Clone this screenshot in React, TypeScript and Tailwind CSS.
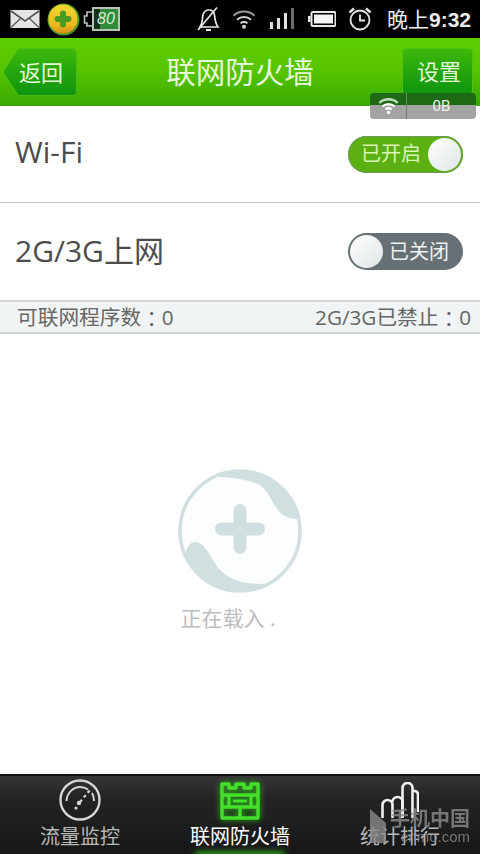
import React from "react";

const CJK = "font-['Open_Sans','Noto_Sans_CJK_SC',sans-serif]";

function Mail() {
  return (
    <svg width="30" height="20" viewBox="0 0 30 20">
      <rect x="0.5" y="1" width="29" height="18" fill="#e4e4e4" />
      <path d="M1 2 L15 12 L29 2" fill="none" stroke="#555" strokeWidth="1.6" />
      <path d="M1 18.5 L11 9 M29 18.5 L19 9" fill="none" stroke="#555" strokeWidth="1.2" />
    </svg>
  );
}

function Guard() {
  return (
    <svg width="33" height="33" viewBox="0 0 33 33">
      <defs>
        <linearGradient id="g1" x1="0" y1="0" x2="0" y2="1">
          <stop offset="0" stopColor="#f2d930" />
          <stop offset="0.7" stopColor="#eeb81e" />
          <stop offset="1" stopColor="#d98f14" />
        </linearGradient>
      </defs>
      <circle cx="16.5" cy="16.5" r="16" fill="#4f9a2c" />
      <circle cx="16" cy="16" r="14.5" fill="url(#g1)" />
      <path d="M16 7.5 a3 3 0 0 1 3 3 v2.5 h2.5 a3 3 0 0 1 0 6 h-2.5 v2.5 a3 3 0 0 1 -6 0 v-2.5 h-2.5 a3 3 0 0 1 0 -6 h2.5 v-2.5 a3 3 0 0 1 3 -3Z" fill="#4c9a20" />
    </svg>
  );
}

function GreenBattery() {
  return (
    <div className="flex items-center">
      <svg width="9" height="22" viewBox="0 0 9 22">
        <path d="M9 4 H4 V8 H1.5 V15 H4 V18 H9" fill="none" stroke="#b9c6b9" strokeWidth="1.6" />
      </svg>
      <div className="flex h-[24px] w-[28px] items-center justify-start border-2 border-[#b5c4b5] bg-[linear-gradient(90deg,#14331a_0%,#14331a_25%,#2e8c3c_25%,#2e8c3c_100%)] pl-[3px]">
        <span className="font-['Liberation_Sans',sans-serif] text-[16px] italic leading-none text-[#d9ecd9]">80</span>
      </div>
    </div>
  );
}

function MuteBell() {
  return (
    <svg width="24" height="26" viewBox="0 0 24 26" fill="none" stroke="#e8e8e8" strokeWidth="1.7">
      <path d="M4 21 C7 17 6 13 7 9 C8 5 11 4 13 4 C16 4 18 6 18.5 9 C19 13 19 17 22 21 Z" />
      <path d="M10 24 h5" strokeWidth="2" />
      <path d="M2 24 L21 1.5" />
    </svg>
  );
}

function Wifi({ color = "#cfcfcf", w = 24, sw = 2 }: { color?: string; w?: number; sw?: number }) {
  return (
    <svg width={w} height={w * 0.85} viewBox="0 0 24 20" fill="none" stroke={color} strokeWidth={sw}>
      <path d="M1.5 6.5 C7.5 1 16.5 1 22.5 6.5" opacity="0.75" />
      <path d="M5 10.5 C9 7 15 7 19 10.5" />
      <path d="M8.5 14 C10.5 12.5 13.5 12.5 15.5 14" />
      <circle cx="12" cy="17.5" r="2" fill={color} stroke="none" />
    </svg>
  );
}

function Signal() {
  return (
    <svg width="24" height="22" viewBox="0 0 24 22">
      <rect x="0" y="14" width="3" height="7" fill="#e0e0e0" />
      <rect x="7" y="10" width="3" height="11" fill="#e0e0e0" />
      <rect x="14" y="5" width="3" height="16" fill="#e0e0e0" />
      <rect x="21" y="0" width="3" height="21" fill="#6e6e6e" />
    </svg>
  );
}

function PhoneBattery() {
  return (
    <svg width="28" height="16" viewBox="0 0 28 16">
      <rect x="0" y="5" width="2.5" height="6" fill="#e8e8e8" />
      <rect x="3.5" y="1" width="24" height="14" rx="1.5" fill="none" stroke="#e8e8e8" strokeWidth="2" />
      <rect x="6" y="3.5" width="19" height="9" fill="#f4f4f4" />
    </svg>
  );
}

function Clock() {
  return (
    <svg width="24" height="24" viewBox="0 0 24 24" fill="none" stroke="#e8e8e8" strokeWidth="1.8">
      <circle cx="12" cy="13" r="9.5" />
      <path d="M12 7.5 V13.5 H17" />
      <path d="M1.5 5.5 L6 1.5 M22.5 5.5 L18 1.5" strokeWidth="2.4" />
    </svg>
  );
}

function StatusBar() {
  return (
    <div className="flex h-[38px] items-center bg-black pl-[10px] pr-[9px]">
      <Mail />
      <div className="ml-[7px]"><Guard /></div>
      <div className="ml-[3px]"><GreenBattery /></div>
      <div className="ml-[76px]"><MuteBell /></div>
      <div className="ml-[12px]"><Wifi /></div>
      <div className="ml-[14px]"><Signal /></div>
      <div className="ml-[14px]"><PhoneBattery /></div>
      <div className="ml-[12px]"><Clock /></div>
      <span className="ml-auto font-['Liberation_Sans','Noto_Sans_CJK_SC',sans-serif] text-[21px] font-bold leading-none text-[#ececec]">
        <span className="font-normal">晚上</span>9:32
      </span>
    </div>
  );
}

function BackShape() {
  return (
    <svg className="absolute inset-0" width="75" height="48" viewBox="0 0 75 48">
      <defs>
        <linearGradient id="b1" x1="0" y1="0" x2="0" y2="1">
          <stop offset="0" stopColor="#3fb80a" />
          <stop offset="1" stopColor="#0d9410" />
        </linearGradient>
      </defs>
      <path d="M1 24 L16 1 Q16.5 0.5 18 0.5 H70 Q74.5 0.5 74.5 5 V43 Q74.5 47.5 70 47.5 H18 Q16.5 47.5 16 47 Z" fill="url(#b1)" stroke="#4cc214" strokeWidth="0.8" />
    </svg>
  );
}

function Header() {
  return (
    <div className="relative flex h-[68px] items-center justify-between border-b border-[#33a004] bg-[linear-gradient(180deg,#5ecf00_0%,#56c400_50%,#3aaa02_100%)] pl-[2px] pr-[7px]">
      <div className={`relative flex h-[48px] w-[75px] items-center justify-end pr-[14px] text-[22px] text-[#e4f7d8] ${CJK}`}>
        <BackShape />
        <span className="relative mt-[1px] leading-none">返回</span>
      </div>
      <span className={`absolute left-0 right-0 text-center text-[29.5px] leading-none text-[#e4f7d8] ${CJK}`}>联网防火墙</span>
      <div className={`flex h-[47px] w-[71px] items-center justify-center rounded-[4px] border border-[#4cc214] bg-[linear-gradient(180deg,#3fb80a_0%,#0d9410_100%)] pl-[3px] text-[22px] text-[#e4f7d8] ${CJK}`}>
        <span className="-mt-[1px] leading-none">设置</span>
      </div>
      <div className="absolute right-[4px] top-[55px] flex h-[26px] w-[106px] overflow-hidden rounded-[4px] bg-[linear-gradient(180deg,#1e6a14_0%,#1e6a14_48%,#a3a3a3_48%,#a3a3a3_100%)]">
        <div className="flex w-[37px] items-center justify-center border-r border-[#6f7f6f]">
          <Wifi color="#ffffff" w={21} sw={2.6} />
        </div>
        <div className="flex flex-1 items-center justify-center font-['Roboto',sans-serif] text-[15px] leading-none text-[#eef2ee]">0B</div>
      </div>
    </div>
  );
}

function Toggle({ on }: { on: boolean }) {
  const knob = (
    <div className="h-[33px] w-[33px] shrink-0 rounded-full bg-[linear-gradient(135deg,#ffffff_0%,#dfe5e5_100%)]" />
  );
  return (
    <div
      className={`flex h-[37px] w-[115px] items-center justify-between rounded-full px-[2px] ${on ? "bg-[#5cb011] ring-1 ring-inset ring-[#6f9a5c]" : "bg-[#667075]"}`}
    >
      {!on && knob}
      <span className={`text-[20px] leading-none ${CJK} ${on ? "ml-[11px] text-[#d7f5b5]" : "mr-[12px] text-[#eef1f1]"}`}>
        {on ? "已开启" : "已关闭"}
      </span>
      {on && knob}
    </div>
  );
}

function Row({ label, on, h, lift }: { label: string; on: boolean; h: string; lift: string }) {
  return (
    <div className={`flex items-center justify-between pl-[15px] pr-[17px] ${h}`}>
      <span className={`text-[30px] leading-none text-[#4c4c4c] ${CJK} ${lift}`}>{label}</span>
      <Toggle on={on} />
    </div>
  );
}

function Loader() {
  return (
    <svg width="124" height="124" viewBox="0 0 124 124">
      <circle cx="62" cy="62" r="60" fill="#fcfdfd" stroke="#d2dfe0" strokeWidth="3.5" />
      <path d="M37 7 C50 9 66 9 80 15 C92 21 94 38 105 46 C110 49 116 50 121 50 A60 60 0 0 0 37 7Z" fill="#d2dfe0" />
      <path d="M7 86 C9 78 12 73 17 73 C26 73 32 86 38 96 C46 108 64 118 92 114 A60 60 0 0 1 7 86Z" fill="#d2dfe0" />
      <path d="M62 35 a6.5 6.5 0 0 1 6.5 6.5 v12 h12 a6.5 6.5 0 0 1 0 13 h-12 v12 a6.5 6.5 0 0 1 -13 0 v-12 h-12 a6.5 6.5 0 0 1 0 -13 h12 v-12 a6.5 6.5 0 0 1 6.5 -6.5Z" fill="#d2dfe0" />
    </svg>
  );
}

function Gauge() {
  return (
    <svg width="42" height="42" viewBox="0 0 42 42" fill="none" stroke="#d6d6d6" className="-mt-[3px]">
      <circle cx="21" cy="21" r="19.5" strokeWidth="2.4" />
      <path d="M7.5 22 C8 13 15 8 21 8 C24.5 8 27 9 29 10.5" strokeWidth="2" />
      <path d="M33 14 C34.5 16.5 35 19 35 22" strokeWidth="2" />
      <path d="M21 23 L31 11" strokeWidth="2.2" strokeDasharray="3 3" />
      <circle cx="20" cy="24" r="2.2" fill="#d6d6d6" stroke="none" />
      <circle cx="17" cy="29" r="1.6" fill="#d6d6d6" stroke="none" />
    </svg>
  );
}

function Castle() {
  return (
    <svg width="40" height="38" viewBox="0 0 40 38" fill="none" stroke="#45e02a" strokeWidth="3.4" strokeLinejoin="round" className="drop-shadow-[0_0_3px_#2fbf1a]">
      <path d="M2 2 V36 H38 V2 H31 V6 H24 V2 H16 V6 H9 V2 Z" />
      <path d="M2 13 H38 M2 25 H38" />
      <path d="M9 13 V25 M31 13 V25 M20 25 V36" />
      <rect x="13" y="17.5" width="14" height="3" fill="#45e02a" stroke="none" />
    </svg>
  );
}

function Bars() {
  return (
    <svg width="38" height="38" viewBox="0 0 38 38" fill="none" stroke="#f0f0f0" strokeWidth="2.6">
      <path d="M1.5 36 V23 a5 5 0 0 1 10 0 V36" />
      <path d="M11.5 20 a5 5 0 0 1 10 0 V36" />
      <path d="M21.5 36 V6 a5 5 0 0 1 10 0 V36" />
      <path d="M31.5 9 h2 a3.5 3.5 0 0 1 3.5 3.5 V30" />
    </svg>
  );
}

function Tab({ icon, label, active }: { icon: React.ReactNode; label: string; active?: boolean }) {
  return (
    <div className="relative flex flex-1 flex-col items-center">
      <div className="flex h-[50px] items-center justify-center">{icon}</div>
      <span className={`mt-[1px] text-[20px] leading-none ${CJK} ${active ? "text-white" : "text-[#b8b8b8]"}`}>{label}</span>
      {active && (
        <div className="absolute bottom-[-6px] h-[8px] w-[90px] rounded-full bg-[#2fb81a] blur-[3px]" />
      )}
    </div>
  );
}

function Watermark() {
  return (
    <div className="absolute bottom-[9px] right-[10px] flex items-start opacity-80">
      <svg width="18" height="34" viewBox="0 0 18 34" className="mr-[2px]">
        <path d="M0 0 L16 14 V34 H0Z" fill="#8a8a8a" />
      </svg>
      <div className="flex flex-col items-end">
        <span className={`text-[20px] font-bold leading-[20px] text-[#8c8c8c] ${CJK}`}>手机中国</span>
        <span className="font-['Liberation_Sans',sans-serif] text-[15px] leading-[16px] text-[#8c8c8c]">cnmo.com</span>
      </div>
    </div>
  );
}

function Colon() {
  return <span className="inline-block translate-y-[2px] font-['Noto_Sans_CJK_TC',sans-serif]">：</span>;
}

export default function App() {
  return (
    <div className="flex h-[854px] w-[480px] flex-col overflow-hidden bg-white">
      <StatusBar />
      <Header />
      <Row label="Wi-Fi" on h="h-[96px]" lift="-mt-[4px]" />
      <div className="h-px bg-[#c4c4c4]" />
      <Row label="2G/3G上网" on={false} h="h-[97px]" lift="-mt-[1px]" />
      <div className={`flex h-[34px] items-center justify-between border-y-2 border-y-[#d3d6d6] bg-[#f0f4f4] pl-[17px] pr-[9px] text-[20.7px] leading-none text-[#666] ${CJK}`}>
        <span>可联网程序数<Colon />0</span>
        <span>2G/3G已禁止<Colon />0</span>
      </div>
      <div className="flex flex-1 flex-col items-center pt-[135px]">
        <Loader />
        <span className={`mt-[15px] pr-[24px] text-[21px] leading-none text-[#bdbdbd] ${CJK}`}>正在载入 .</span>
      </div>
      <div className="relative flex h-[80px] border-t-2 border-t-[#111] bg-[linear-gradient(180deg,#353535_0%,#232323_30%,#171717_100%)]">
        <Tab icon={<Gauge />} label="流量监控" />
        <Tab icon={<Castle />} label="联网防火墙" active />
        <Tab icon={<Bars />} label="统计排行" />
        <Watermark />
      </div>
    </div>
  );
}
